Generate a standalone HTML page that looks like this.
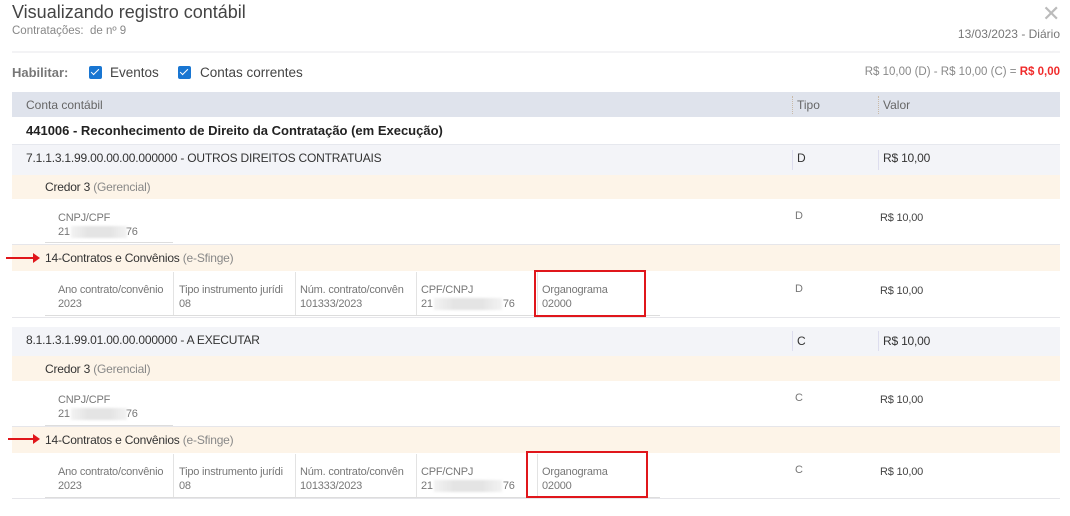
<!DOCTYPE html><html><head><meta charset="utf-8"><style>
body{margin:0;width:1070px;height:516px;background:#fff;font-family:"Liberation Sans",sans-serif;color:#333;position:relative;overflow:hidden}
.a{position:absolute;white-space:nowrap}
.bg{position:absolute;left:12px;width:1048px}
.g{color:#888}
.s{font-size:11px;color:#777;letter-spacing:-0.2px;line-height:14px}
.t{font-size:12px;letter-spacing:-0.2px}
.blur{position:absolute;height:12px;width:56px;background:linear-gradient(90deg,rgba(230,230,230,0.5),#e4e4e4 30%,#e4e4e4 70%,rgba(230,230,230,0.5));filter:blur(1px)}
.sep{position:absolute;width:1px;background:#e3e3e3}
.box{position:absolute;border:2px solid #e0161b}
.arrow{position:absolute;height:2px;background:#e0161b}
.arrow:after{content:"";position:absolute;right:-6px;top:-4px;border-left:7px solid #e0161b;border-top:5px solid transparent;border-bottom:5px solid transparent}
.cb{position:absolute;width:13px;height:13px;background:#1976d2;border-radius:2px}
.cb:after{content:"";position:absolute;left:4px;top:1px;width:3px;height:7px;border:solid #fff;border-width:0 1.5px 1.5px 0;transform:rotate(45deg)}
</style></head><body>
<div class="a" style="left:12px;top:2px;font-size:18px;color:#444">Visualizando registro contábil</div>
<div class="a g" style="left:12px;top:25px;font-size:11.5px">Contratações:&nbsp; de nº 9</div>
<div class="a" style="left:1042px;top:1px;font-size:22px;color:#bbb;font-weight:300">✕</div>
<div class="a g" style="right:10px;top:27px;font-size:12px;color:#777">13/03/2023 - Diário</div>
<div class="bg" style="top:51px;height:2px;background:#f3f3f5"></div>
<div class="a" style="left:12px;top:65px;font-size:13px;font-weight:bold;color:#777">Habilitar:</div>
<div class="cb" style="left:89px;top:66px"></div>
<div class="a" style="left:110px;top:65px;font-size:13.5px;color:#444">Eventos</div>
<div class="cb" style="left:178px;top:66px"></div>
<div class="a" style="left:200px;top:65px;font-size:13.5px;color:#444">Contas correntes</div>
<div class="a" style="right:10px;top:66px;font-size:11.5px;color:#888">R$ 10,00 (D) - R$ 10,00 (C) = <b style="color:#f02b2b">R$ 0,00</b></div>
<div class="bg" style="top:92px;height:25px;background:#dfe3ec"></div>
<div class="a" style="left:26px;top:98px;font-size:12px;color:#666">Conta contábil</div>
<div class="a" style="left:792px;top:96px;width:0;height:18px;border-left:1px dotted #c9b9a6"></div>
<div class="a" style="left:878px;top:96px;width:0;height:18px;border-left:1px dotted #c9b9a6"></div>
<div class="a" style="left:797px;top:98px;font-size:12px;color:#666">Tipo</div>
<div class="a" style="left:883px;top:98px;font-size:12px;color:#666">Valor</div>
<div class="a" style="left:26px;top:123px;font-size:13px;font-weight:bold;color:#222">441006 - Reconhecimento de Direito da Contratação (em Execução)</div>
<div class="bg" style="top:144px;height:1px;background:#e6e8ee"></div>

<!-- block 1 -->
<div class="bg" style="top:145px;height:30px;background:#f3f4f8"></div>
<div class="a t" style="left:26px;top:151px">7.1.1.3.1.99.00.00.00.000000 - OUTROS DIREITOS CONTRATUAIS</div>
<div class="sep" style="left:792px;top:150px;height:20px;background:#dde"></div>
<div class="sep" style="left:878px;top:150px;height:20px;background:#dde"></div>
<div class="a t" style="left:797px;top:151px">D</div>
<div class="a t" style="left:883px;top:151px">R$ 10,00</div>
<div class="bg" style="top:175px;height:24px;background:#fdf4e8"></div>
<div class="a t" style="left:45px;top:180px">Credor 3 <span class="g">(Gerencial)</span></div>
<div class="a s" style="left:58px;top:211px">CNPJ/CPF<br>21<span style="display:inline-block;width:56px"></span>76</div>
<div class="blur" style="left:71px;top:226px"></div>
<div class="a" style="left:45px;top:242px;width:128px;height:1px;background:#ddd"></div>
<div class="a s" style="left:795px;top:209px">D</div>
<div class="a s" style="left:880px;top:211px;color:#444">R$ 10,00</div>
<div class="bg" style="top:244px;height:1px;background:#e6e6ea"></div>
<div class="bg" style="top:245px;height:26px;background:#fdf4e8"></div>
<div class="arrow" style="left:6px;top:257px;width:28px"></div>
<div class="a t" style="left:45px;top:251px">14-Contratos e Convênios <span class="g">(e-Sfinge)</span></div>
<div class="a s" style="left:58px;top:283px">Ano contrato/convênio<br>2023</div>
<div class="a s" style="left:179px;top:283px">Tipo instrumento jurídi<br>08</div>
<div class="a s" style="left:300px;top:283px">Núm. contrato/convên<br>101333/2023</div>
<div class="a s" style="left:421px;top:283px">CPF/CNPJ<br>21<span style="display:inline-block;width:70px"></span>76</div>
<div class="blur" style="left:434px;top:298px;width:68px"></div>
<div class="a s" style="left:542px;top:283px">Organograma<br>02000</div>
<div class="sep" style="left:173px;top:272px;height:43px"></div>
<div class="sep" style="left:295px;top:272px;height:43px"></div>
<div class="sep" style="left:416px;top:272px;height:43px"></div>
<div class="sep" style="left:537px;top:272px;height:43px"></div>
<div class="a" style="left:45px;top:315px;width:615px;height:1px;background:#ddd"></div>
<div class="box" style="left:534px;top:270px;width:108px;height:43px"></div>
<div class="a s" style="left:795px;top:282px">D</div>
<div class="a s" style="left:880px;top:284px;color:#444">R$ 10,00</div>
<div class="bg" style="top:317px;height:1px;background:#e6e6ea"></div>

<!-- block 2 -->
<div class="bg" style="top:327px;height:29px;background:#f3f4f8"></div>
<div class="a t" style="left:26px;top:333px">8.1.1.3.1.99.01.00.00.000000 - A EXECUTAR</div>
<div class="sep" style="left:792px;top:331px;height:20px;background:#dde"></div>
<div class="sep" style="left:878px;top:331px;height:20px;background:#dde"></div>
<div class="a t" style="left:797px;top:334px">C</div>
<div class="a t" style="left:883px;top:334px">R$ 10,00</div>
<div class="bg" style="top:356px;height:25px;background:#fdf4e8"></div>
<div class="a t" style="left:45px;top:362px">Credor 3 <span class="g">(Gerencial)</span></div>
<div class="a s" style="left:58px;top:393px">CNPJ/CPF<br>21<span style="display:inline-block;width:56px"></span>76</div>
<div class="blur" style="left:71px;top:408px"></div>
<div class="a" style="left:45px;top:425px;width:128px;height:1px;background:#ddd"></div>
<div class="a s" style="left:795px;top:391px">C</div>
<div class="a s" style="left:880px;top:393px;color:#444">R$ 10,00</div>
<div class="bg" style="top:426px;height:1px;background:#e6e6ea"></div>
<div class="bg" style="top:427px;height:26px;background:#fdf4e8"></div>
<div class="arrow" style="left:8px;top:438px;width:26px"></div>
<div class="a t" style="left:45px;top:433px">14-Contratos e Convênios <span class="g">(e-Sfinge)</span></div>
<div class="a s" style="left:58px;top:465px">Ano contrato/convênio<br>2023</div>
<div class="a s" style="left:179px;top:465px">Tipo instrumento jurídi<br>08</div>
<div class="a s" style="left:300px;top:465px">Núm. contrato/convên<br>101333/2023</div>
<div class="a s" style="left:421px;top:465px">CPF/CNPJ<br>21<span style="display:inline-block;width:70px"></span>76</div>
<div class="blur" style="left:434px;top:480px;width:68px"></div>
<div class="a s" style="left:542px;top:465px">Organograma<br>02000</div>
<div class="sep" style="left:173px;top:454px;height:43px"></div>
<div class="sep" style="left:295px;top:454px;height:43px"></div>
<div class="sep" style="left:416px;top:454px;height:43px"></div>
<div class="sep" style="left:537px;top:454px;height:43px"></div>
<div class="a" style="left:45px;top:497px;width:615px;height:1px;background:#ddd"></div>
<div class="box" style="left:526px;top:451px;width:118px;height:43px"></div>
<div class="a s" style="left:795px;top:463px">C</div>
<div class="a s" style="left:880px;top:465px;color:#444">R$ 10,00</div>
<div class="bg" style="top:498px;height:1px;background:#e6e6ea"></div>
</body></html>
